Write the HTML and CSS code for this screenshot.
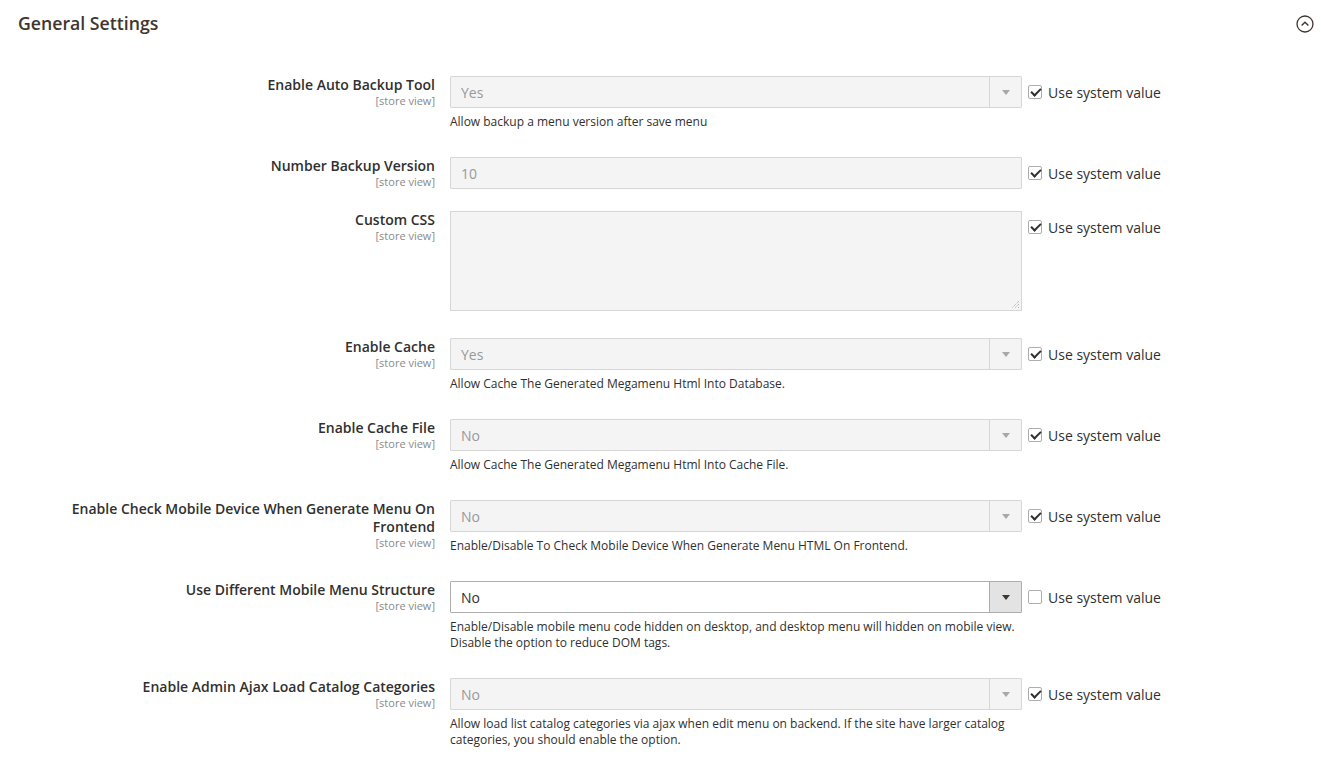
FILE: index.html
```html
<!DOCTYPE html>
<html>
<head>
<meta charset="utf-8">
<link rel="stylesheet" href="styles.css">
</head>
<body>
<div class="page">
  <div class="section-head">
    <h2 class="section-title">General Settings</h2>
    <svg class="collapse-icon" width="20" height="20" viewBox="0 0 20 20">
      <circle cx="10" cy="10" r="8" fill="none" stroke="#41362f" stroke-width="1.3"/>
      <path d="M6.6 11.6 L10 8.2 L13.4 11.6" fill="none" stroke="#41362f" stroke-width="1.4"/>
    </svg>
  </div>

  <div class="form">
    <div class="row">
      <div class="label"><div class="label-text">Enable Auto Backup Tool</div><div class="scope">[store view]</div></div>
      <div class="control">
        <div class="select disabled"><span class="value">Yes</span><span class="arrow"><i></i></span></div>
        <div class="note">Allow backup a menu version after save menu</div>
      </div>
      <div class="inherit"><span class="cb checked"></span><span>Use system value</span></div>
    </div>

    <div class="row">
      <div class="label"><div class="label-text">Number Backup Version</div><div class="scope">[store view]</div></div>
      <div class="control">
        <div class="input disabled"><span class="value">10</span></div>
      </div>
      <div class="inherit"><span class="cb checked"></span><span>Use system value</span></div>
    </div>

    <div class="row">
      <div class="label"><div class="label-text">Custom CSS</div><div class="scope">[store view]</div></div>
      <div class="control">
        <div class="textarea disabled">
          <svg class="grip" width="10" height="10" viewBox="0 0 10 10">
            <path d="M9 2 L2 9 M9 5 L5 9 M9 8 L8 9" stroke="#a0a0a0" stroke-width="1" stroke-dasharray="1 1"/>
          </svg>
        </div>
      </div>
      <div class="inherit"><span class="cb checked"></span><span>Use system value</span></div>
    </div>

    <div class="row">
      <div class="label"><div class="label-text">Enable Cache</div><div class="scope">[store view]</div></div>
      <div class="control">
        <div class="select disabled"><span class="value">Yes</span><span class="arrow"><i></i></span></div>
        <div class="note">Allow Cache The Generated Megamenu Html Into Database.</div>
      </div>
      <div class="inherit"><span class="cb checked"></span><span>Use system value</span></div>
    </div>

    <div class="row">
      <div class="label"><div class="label-text">Enable Cache File</div><div class="scope">[store view]</div></div>
      <div class="control">
        <div class="select disabled"><span class="value">No</span><span class="arrow"><i></i></span></div>
        <div class="note">Allow Cache The Generated Megamenu Html Into Cache File.</div>
      </div>
      <div class="inherit"><span class="cb checked"></span><span>Use system value</span></div>
    </div>

    <div class="row">
      <div class="label"><div class="label-text">Enable Check Mobile Device When Generate Menu On Frontend</div><div class="scope">[store view]</div></div>
      <div class="control">
        <div class="select disabled"><span class="value">No</span><span class="arrow"><i></i></span></div>
        <div class="note">Enable/Disable To Check Mobile Device When Generate Menu HTML On Frontend.</div>
      </div>
      <div class="inherit"><span class="cb checked"></span><span>Use system value</span></div>
    </div>

    <div class="row">
      <div class="label"><div class="label-text">Use Different Mobile Menu Structure</div><div class="scope">[store view]</div></div>
      <div class="control">
        <div class="select"><span class="value">No</span><span class="arrow"><i></i></span></div>
        <div class="note">Enable/Disable mobile menu code hidden on desktop, and desktop menu will hidden on mobile view. Disable the option to reduce DOM tags.</div>
      </div>
      <div class="inherit"><span class="cb"></span><span>Use system value</span></div>
    </div>

    <div class="row">
      <div class="label"><div class="label-text">Enable Admin Ajax Load Catalog Categories</div><div class="scope">[store view]</div></div>
      <div class="control">
        <div class="select disabled"><span class="value">No</span><span class="arrow"><i></i></span></div>
        <div class="note">Allow load list catalog categories via ajax when edit menu on backend. If the site have larger catalog categories, you should enable the option.</div>
      </div>
      <div class="inherit"><span class="cb checked"></span><span>Use system value</span></div>
    </div>
  </div>
</div>
</body>
</html>
```

FILE: styles.css
```css
* { box-sizing: border-box; }
html, body { margin: 0; padding: 0; background: #fff; }
body {
  font-family: "Open Sans", "Noto Sans", sans-serif;
  color: #303030;
}
.page { width: 1321px; }

.section-head {
  display: flex;
  align-items: center;
  justify-content: space-between;
  padding: 12px 6px 0 18px;
  height: 34px;
}
.section-title {
  margin: 0;
  font-size: 17.7px;
  line-height: 22px;
  font-weight: 600;
  color: #41362f;
}
.collapse-icon { display: block; margin-top: 2px; }

.form { margin-top: 42px; }

.row {
  display: flex;
  align-items: flex-start;
  margin-bottom: 22px;
}
.label {
  width: 435px;
  padding-left: 45px;
  text-align: right;
  flex: none;
}
.label-text {
  font-size: 14px;
  line-height: 18px;
  font-weight: 600;
  color: #303030;
}
.scope {
  font-size: 11px;
  line-height: 13px;
  color: #8a8a8a;
}

.control {
  width: 572px;
  margin-left: 15px;
  flex: none;
}

.select, .input {
  height: 32px;
  border: 1px solid #adadad;
  border-radius: 1px;
  background: #fff;
  display: flex;
  align-items: center;
  font-size: 14px;
  color: #303030;
  position: relative;
}
.select .value, .input .value {
  padding-left: 10px;
  flex: 1;
}
.select .arrow {
  width: 32px;
  height: 100%;
  border-left: 1px solid #adadad;
  background: #e3e3e3;
  display: flex;
  align-items: center;
  justify-content: center;
}
.select .arrow i {
  width: 0; height: 0;
  border-left: 4px solid transparent;
  border-right: 4px solid transparent;
  border-top: 5px solid #41362f;
}

.disabled {
  background: #f4f4f4;
  border-color: #d6d6d6;
  color: #999;
}
.select.disabled .arrow {
  background: #f4f4f4;
  border-left-color: #d6d6d6;
}
.select.disabled .arrow i { border-top-color: #a8a8a8; }

.textarea {
  height: 100px;
  border: 1px solid #d6d6d6;
  background: #f4f4f4;
  position: relative;
  margin-bottom: 5px;
}
.grip { position: absolute; right: 1px; bottom: 1px; }

.note {
  margin-top: 6px;
  margin-bottom: 5px;
  font-size: 12px;
  line-height: 16px;
  color: #303030;
}

.inherit {
  margin-left: 6px;
  height: 32px;
  display: flex;
  align-items: center;
  font-size: 14px;
  color: #303030;
}
.cb {
  width: 14px;
  height: 14px;
  border: 1px solid #adadad;
  border-radius: 2px;
  background: #fff;
  margin-right: 6px;
  position: relative;
  flex: none;
}
.cb.checked::after {
  content: "";
  position: absolute;
  left: 4px;
  top: 0px;
  width: 4px;
  height: 8px;
  border-right: 2px solid #303030;
  border-bottom: 2px solid #303030;
  transform: rotate(45deg);
}
```
